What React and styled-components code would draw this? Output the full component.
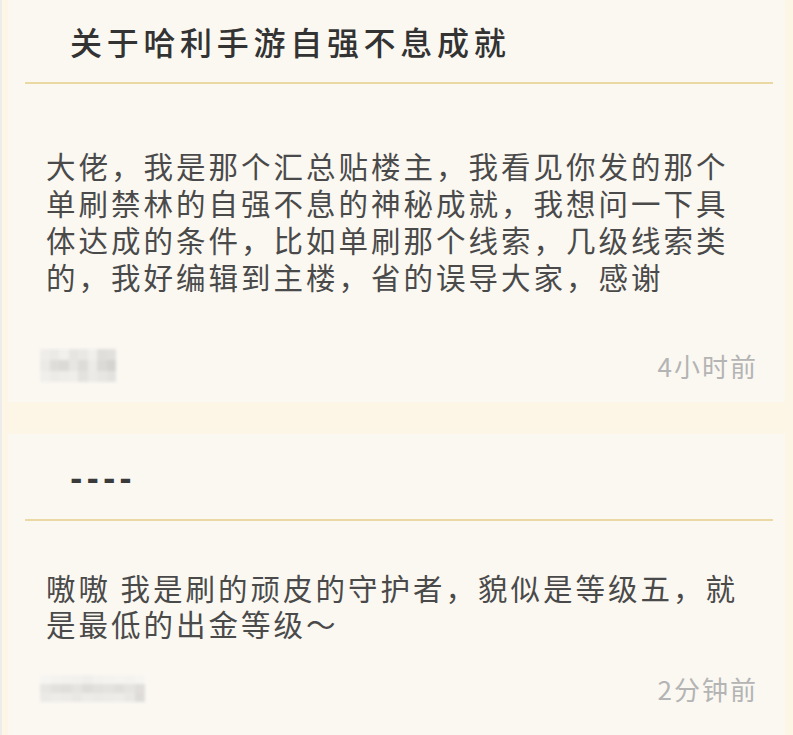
import React from "react";
import styled, { createGlobalStyle } from "styled-components";

const Global = createGlobalStyle`
  html, body { margin: 0; padding: 0; }
  body {
    background: #fdf6e6;
    font-family: "Noto Sans CJK SC", "Noto Sans", sans-serif;
    width: 793px;
    height: 735px;
    overflow: hidden;
  }
`;

const Page = styled.div`
  width: 793px;
  height: 735px;
  overflow: hidden;
  display: flex;
  flex-direction: column;
  gap: 32px;
  border-left: 2px solid #ececea;
  box-sizing: border-box;
  padding-left: 6px;
  padding-right: 8px;
`;

const Card = styled.section`
  background: #fbf8f2;
  box-shadow: 0 0 10px 4px #fcf6e8;
  display: flex;
  flex-direction: column;
`;

const Header = styled.div`
  height: ${(p) => p.$h}px;
  display: flex;
  align-items: center;
  padding-left: 62px;
  padding-top: ${(p) => p.$pt || 0}px;
  box-sizing: border-box;
`;

const Title = styled.h1`
  margin: 0;
  font-size: 32px;
  font-weight: 500;
  letter-spacing: 4.7px;
  color: #333;
  line-height: 1;
`;

const Dashes = styled.div`
  font-size: 30px;
  font-weight: 700;
  letter-spacing: 4px;
  color: #3a3a3a;
  font-family: "DejaVu Sans", sans-serif;
  line-height: 1;
`;

const Divider = styled.hr`
  margin: 0 12px 0 17px;
  border: none;
  height: 2px;
  background: #ead9a2;
`;

const Body = styled.p`
  margin: 0;
  padding: ${(p) => p.$pt}px 45px 0 38px;
  font-size: 29.5px;
  letter-spacing: 3px;
  line-height: ${(p) => p.$lh}px;
  color: #4a4a4a;
`;

const Meta = styled.div`
  display: flex;
  align-items: center;
  justify-content: space-between;
  height: 40px;
  margin-top: ${(p) => p.$mt}px;
  padding: 0 27px 0 32px;
  padding-bottom: ${(p) => p.$pb}px;
  box-sizing: content-box;
`;

const Mosaic = styled.div`
  display: grid;
  grid-template-columns: repeat(${(p) => p.$cols}, ${(p) => p.$cw}px);
  grid-auto-rows: ${(p) => p.$ch}px;
  filter: blur(1.5px);
`;

const Cell = styled.div`
  background: ${(p) => p.$c};
`;

const Time = styled.span`
  font-size: 26px;
  letter-spacing: 2px;
  color: #b4b4b4;
`;

const BlurName = ({ cols, cw, ch, shades }) => (
  <Mosaic $cols={cols} $cw={cw} $ch={ch}>
    {shades.map((c, i) => (
      <Cell key={i} $c={c} />
    ))}
  </Mosaic>
);

const name1 = [
  "#efedea", "#eceae7", "#f2f0ed", "#e7e5e2", "#eae8e5", "#f1efec", "#e0deda", "#e2e0dd",
  "#eceae7", "#dfddda", "#dcdad7", "#e8e6e3", "#dedcd9", "#edebe8", "#dcdad7", "#d6d4d1",
  "#f1efec", "#edebe8", "#efedea", "#f0eeeb", "#e4e2df", "#eceae7", "#e8e6e3", "#e4e2df",
];

const name2 = [
  "#f7f5f2", "#f5f3f0", "#f4f2ef", "#f3f1ee", "#f1efec", "#f4f2ef", "#f5f3f0", "#f6f4f1", "#f5f3f0", "#f7f5f2",
  "#e8e6e3", "#e3e1de", "#e1dfdc", "#e6e4e1", "#dfddda", "#e3e1de", "#e5e3e0", "#e1dfdc", "#e6e4e1", "#e0deda",
  "#eceae7", "#eeece9", "#edebe8", "#eae8e5", "#eeece9", "#eceae7", "#edebe8", "#eeece9", "#eae8e5", "#dedcd9",
];

export default function App() {
  return (
    <>
      <Global />
      <Page>
        <Card>
          <Header $h={82}>
            <Title>关于哈利手游自强不息成就</Title>
          </Header>
          <Divider />
          <Body $pt={63} $lh={37}>
            大佬，我是那个汇总贴楼主，我看见你发的那个单刷禁林的自强不息的神秘成就，我想问一下具体达成的条件，比如单刷那个线索，几级线索类的，我好编辑到主楼，省的误导大家，感谢
          </Body>
          <Meta $mt={50} $pb={17}>
            <BlurName cols={8} cw={9.5} ch={11} shades={name1} />
            <Time>4小时前</Time>
          </Meta>
        </Card>
        <Card>
          <Header $h={85} $pt={6}>
            <Dashes>----</Dashes>
          </Header>
          <Divider />
          <Body $pt={48} $lh={36}>
            嗷嗷 我是刷的顽皮的守护者，貌似是等级五，就是最低的出金等级～
          </Body>
          <Meta $mt={27} $pb={40}>
            <BlurName cols={10} cw={10.5} ch={9} shades={name2} />
            <Time>2分钟前</Time>
          </Meta>
        </Card>
      </Page>
    </>
  );
}
